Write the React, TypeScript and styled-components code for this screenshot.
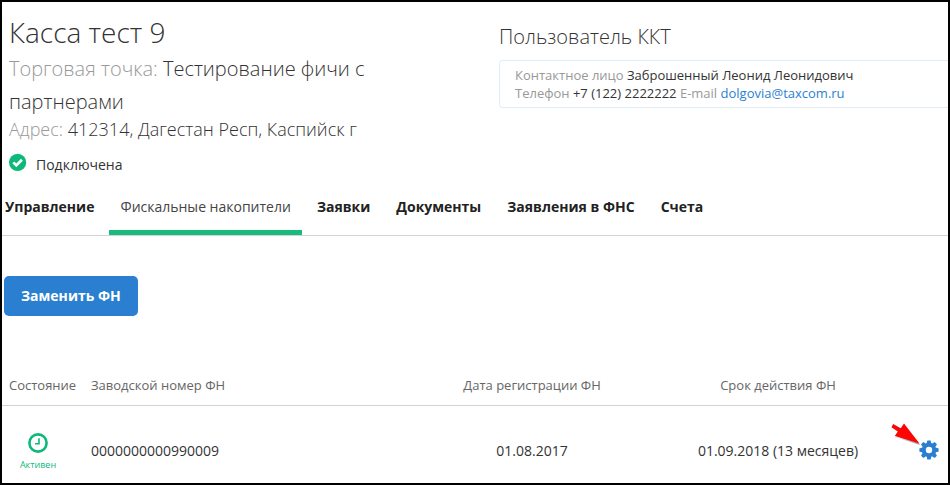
import React from "react";
import styled, { createGlobalStyle } from "styled-components";

const GlobalStyle = createGlobalStyle`
  *, *::before, *::after { box-sizing: border-box; }
  body {
    margin: 0;
    background: #fff;
    color: #333;
    font-family: "Open Sans", "Noto Sans", sans-serif;
    font-size: 14px;
  }
`;

const Page = styled.main`
  display: flex;
  flex-direction: column;
  min-height: 100vh;
  border: 2px solid #000;
  overflow: hidden;
`;

const Header = styled.header`
  display: grid;
  grid-template-columns: 490px minmax(0, 1fr);
  padding: 10px 0 0 7px;
`;

const Summary = styled.section`
  display: flex;
  flex-direction: column;
  padding-right: 64px;
`;

const Title = styled.h1`
  margin: 0;
  font-size: 28px;
  font-weight: 300;
  line-height: 40px;
`;

const Detail = styled.p<{ $size: number; $line: number }>`
  margin: 0;
  font-size: ${(p) => p.$size}px;
  line-height: ${(p) => p.$line}px;
  font-weight: 300;
`;

const Label = styled.span`
  color: #999;
`;

const Status = styled.div`
  display: flex;
  align-items: flex-start;
  gap: 9px;
  margin-top: 13px;
  line-height: 24px;
`;

const UserSection = styled.section`
  padding-top: 10px;
`;

const UserTitle = styled.h2`
  margin: 0 0 8px;
  font-size: 20px;
  font-weight: 300;
  line-height: 30px;
`;

const ContactCard = styled.div`
  padding: 5px 15px;
  border: 1px solid #e0edf8;
  border-right: 0;
  border-radius: 4px 0 0 4px;
  font-size: 13px;
  line-height: 18px;
`;

const Line = styled.p`
  margin: 0;
`;

const MailLink = styled.a`
  color: #2b7fd1;
  text-decoration: none;
`;

const Tabs = styled.nav`
  display: flex;
  gap: 4px;
  height: 46px;
  margin-top: 13px;
  border-bottom: 1px solid #d3d3d3;
`;

const Tab = styled.a<{ $active?: boolean }>`
  padding: 6px 11px 0;
  border-bottom: 5px solid ${(p) => (p.$active ? "#19bb7c" : "transparent")};
  color: ${(p) => (p.$active ? "#444" : "#222")};
  font-weight: ${(p) => (p.$active ? 400 : 700)};
  line-height: 22px;
  text-decoration: none;
  white-space: nowrap;

  &:first-child {
    padding-left: 3px;
  }
`;

const PrimaryButton = styled.button`
  align-self: flex-start;
  margin: 40px 0 0 2px;
  padding: 10px 17px;
  border: 0;
  border-radius: 5px;
  background: #2b7fd1;
  color: #fff;
  font: 700 14px/20px "Open Sans", "Noto Sans", sans-serif;
  cursor: pointer;
`;

const Table = styled.table`
  width: 100%;
  margin-top: 49px;
  border-collapse: collapse;
  table-layout: fixed;
`;

const Column = styled.col<{ $width?: string }>`
  width: ${(p) => p.$width ?? "auto"};
`;

const HeadCell = styled.th<{ $align?: string; $indent?: number }>`
  height: 40px;
  padding: 0 0 0 ${(p) => p.$indent ?? 0}px;
  border-bottom: 1px solid #d3d3d3;
  color: #666;
  font-size: 13px;
  font-weight: 400;
  line-height: 20px;
  text-align: ${(p) => p.$align ?? "left"};
`;

const Cell = styled.td<{ $align?: string }>`
  height: 76px;
  padding: 14px 0 0;
  text-align: ${(p) => p.$align ?? "left"};
`;

const StateBadge = styled.div`
  display: flex;
  flex-direction: column;
  align-items: center;
  gap: 6px;
  width: 72px;
  padding-top: 3px;
  color: #0db97a;
  font-size: 9px;
  line-height: 12px;
`;

const SettingsButton = styled.button`
  display: block;
  position: relative;
  margin-left: 18px;
  padding: 0;
  border: 0;
  background: none;
  cursor: pointer;
`;

const Icon = styled.svg`
  display: block;
  flex: none;
`;

const Pointer = styled.svg`
  position: absolute;
  right: 17px;
  bottom: 13px;
`;

const CheckIcon = () => (
  <Icon width="18" height="18" viewBox="0 0 18 18" aria-hidden="true">
    <circle cx="8.6" cy="9.4" r="8.6" fill="#0db97a" />
    <path d="M4.3 9.4l3 3 5.6-5.6" fill="none" stroke="#fff" strokeWidth="2.7" />
  </Icon>
);

const ClockIcon = () => (
  <Icon width="20" height="20" viewBox="0 0 20 20" fill="none" stroke="#0db97a" aria-hidden="true">
    <circle cx="10" cy="10" r="8.6" strokeWidth="2.6" />
    <path d="M11 5.3v5.5H7" strokeWidth="1.6" />
  </Icon>
);

const teeth = [0, 45, 90, 135, 180, 225, 270, 315];

const GearIcon = () => (
  <Icon width="20" height="20" viewBox="0 0 20 20" aria-hidden="true">
    <circle cx="10" cy="10" r="5.2" fill="none" stroke="#2b7fd1" strokeWidth="4" />
    {teeth.map((angle) => (
      <path
        key={angle}
        d="M7.6 4l.6-3.2Q8.3.4 8.8.4h2.4q.5 0 .6.4l.6 3.2z"
        fill="#2b7fd1"
        transform={`rotate(${angle} 10 10)`}
      />
    ))}
  </Icon>
);

const PointerArrow = () => (
  <Pointer width="32" height="25" viewBox="0 0 32 25" aria-hidden="true">
    <defs>
      <linearGradient id="shade" x1="0" y1="0" x2="1" y2="1">
        <stop offset="0" stopColor="#777" stopOpacity="0.2" />
        <stop offset="1" stopColor="#777" stopOpacity="0.8" />
      </linearGradient>
    </defs>
    <path d="M5 15l25 8-5-6z" fill="url(#shade)" />
    <path d="M3.2 2L1.4 5.2l6.4 4.4L4.8 14 29.5 21.5 14 1.6l-3.3 4.6z" fill="#fb0505" />
  </Pointer>
);

const tabs = ["Управление", "Фискальные накопители", "Заявки", "Документы", "Заявления в ФНС", "Счета"];

const storages = [
  { state: "Активен", serial: "0000000000990009", registered: "01.08.2017", expires: "01.09.2018 (13 месяцев)" },
];

export default function App() {
  return (
    <>
      <GlobalStyle />
      <Page>
        <Header>
          <Summary>
            <Title>Касса тест 9</Title>
            <Detail $size={20} $line={33}>
              <Label>Торговая точка:</Label> Тестирование фичи с партнерами
            </Detail>
            <Detail $size={18} $line={22}>
              <Label>Адрес:</Label> 412314, Дагестан Респ, Каспийск г
            </Detail>
            <Status>
              <CheckIcon />
              Подключена
            </Status>
          </Summary>
          <UserSection>
            <UserTitle>Пользователь ККТ</UserTitle>
            <ContactCard>
              <Line>
                <Label>Контактное лицо</Label> Заброшенный Леонид Леонидович
              </Line>
              <Line>
                <Label>Телефон</Label> +7 (122) 2222222 <Label>E-mail</Label>{" "}
                <MailLink href="mailto:dolgovia@taxcom.ru">dolgovia@taxcom.ru</MailLink>
              </Line>
            </ContactCard>
          </UserSection>
        </Header>

        <Tabs>
          {tabs.map((name, i) => (
            <Tab key={name} href="#" $active={i === 1} aria-current={i === 1 ? "page" : undefined}>
              {name}
            </Tab>
          ))}
        </Tabs>

        <PrimaryButton type="button">Заменить ФН</PrimaryButton>

        <Table>
          <colgroup>
            <Column $width="89px" />
            <Column />
            <Column $width="26%" />
            <Column $width="26%" />
            <Column $width="47px" />
          </colgroup>
          <thead>
            <tr>
              <HeadCell $indent={7}>Состояние</HeadCell>
              <HeadCell>Заводской номер ФН</HeadCell>
              <HeadCell $align="center">Дата регистрации ФН</HeadCell>
              <HeadCell $align="center">Срок действия ФН</HeadCell>
              <HeadCell aria-label="Действия" />
            </tr>
          </thead>
          <tbody>
            {storages.map((item) => (
              <tr key={item.serial}>
                <Cell>
                  <StateBadge>
                    <ClockIcon />
                    {item.state}
                  </StateBadge>
                </Cell>
                <Cell>{item.serial}</Cell>
                <Cell $align="center">{item.registered}</Cell>
                <Cell $align="center">{item.expires}</Cell>
                <Cell>
                  <SettingsButton type="button" aria-label="Настройки">
                    <GearIcon />
                    <PointerArrow />
                  </SettingsButton>
                </Cell>
              </tr>
            ))}
          </tbody>
        </Table>
      </Page>
    </>
  );
}
